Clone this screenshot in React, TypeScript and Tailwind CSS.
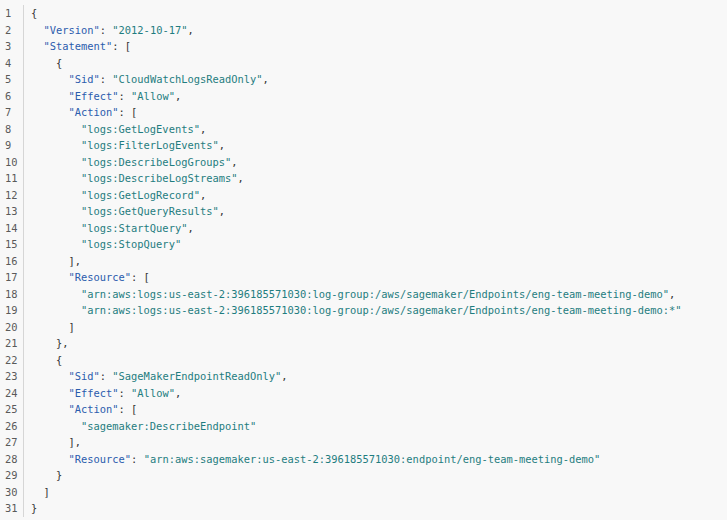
type Tok = [string, "k" | "s" | "p"];

const k = (t: string): Tok => [t, "k"];
const s = (t: string): Tok => [t, "s"];
const p = (t: string): Tok => [t, "p"];

const lines: Tok[][] = [
  [p("{")],
  [p("  "), k('"Version"'), p(": "), s('"2012-10-17"'), p(",")],
  [p("  "), k('"Statement"'), p(": [")],
  [p("    {")],
  [p("      "), k('"Sid"'), p(": "), s('"CloudWatchLogsReadOnly"'), p(",")],
  [p("      "), k('"Effect"'), p(": "), s('"Allow"'), p(",")],
  [p("      "), k('"Action"'), p(": [")],
  [p("        "), s('"logs:GetLogEvents"'), p(",")],
  [p("        "), s('"logs:FilterLogEvents"'), p(",")],
  [p("        "), s('"logs:DescribeLogGroups"'), p(",")],
  [p("        "), s('"logs:DescribeLogStreams"'), p(",")],
  [p("        "), s('"logs:GetLogRecord"'), p(",")],
  [p("        "), s('"logs:GetQueryResults"'), p(",")],
  [p("        "), s('"logs:StartQuery"'), p(",")],
  [p("        "), s('"logs:StopQuery"')],
  [p("      ],")],
  [p("      "), k('"Resource"'), p(": [")],
  [
    p("        "),
    s('"arn:aws:logs:us-east-2:396185571030:log-group:/aws/sagemaker/Endpoints/eng-team-meeting-demo"'),
    p(","),
  ],
  [
    p("        "),
    s('"arn:aws:logs:us-east-2:396185571030:log-group:/aws/sagemaker/Endpoints/eng-team-meeting-demo:*"'),
  ],
  [p("      ]")],
  [p("    },")],
  [p("    {")],
  [p("      "), k('"Sid"'), p(": "), s('"SageMakerEndpointReadOnly"'), p(",")],
  [p("      "), k('"Effect"'), p(": "), s('"Allow"'), p(",")],
  [p("      "), k('"Action"'), p(": [")],
  [p("        "), s('"sagemaker:DescribeEndpoint"')],
  [p("      ],")],
  [
    p("      "),
    k('"Resource"'),
    p(": "),
    s('"arn:aws:sagemaker:us-east-2:396185571030:endpoint/eng-team-meeting-demo"'),
  ],
  [p("    }")],
  [p("  ]")],
  [p("}")],
];

const color = {
  k: "text-[#2b5cad]",
  s: "text-[#1f7d80]",
  p: "text-[#333333]",
};

export default function App() {
  return (
    <div className="w-[727px] h-[520px] bg-[#f8f8f8] overflow-hidden pt-[5px] font-['DejaVu_Sans_Mono',monospace] text-[10.4px] leading-[16.5px]">
      <div className="flex">
        {/* gutter */}
        <div className="w-[24px] pl-[5px] border-r border-[#d6d6d6] text-[#5a5a5a] select-none">
          {lines.map((_, i) => (
            <div key={i}>{i + 1}</div>
          ))}
        </div>

        {/* code */}
        <pre className="pl-[7px] font-['DejaVu_Sans_Mono',monospace] whitespace-pre">
          {lines.map((line, i) => (
            <div key={i}>
              {line.map(([t, c], j) => (
                <span key={j} className={color[c]}>
                  {t}
                </span>
              ))}
            </div>
          ))}
        </pre>
      </div>
    </div>
  );
}
